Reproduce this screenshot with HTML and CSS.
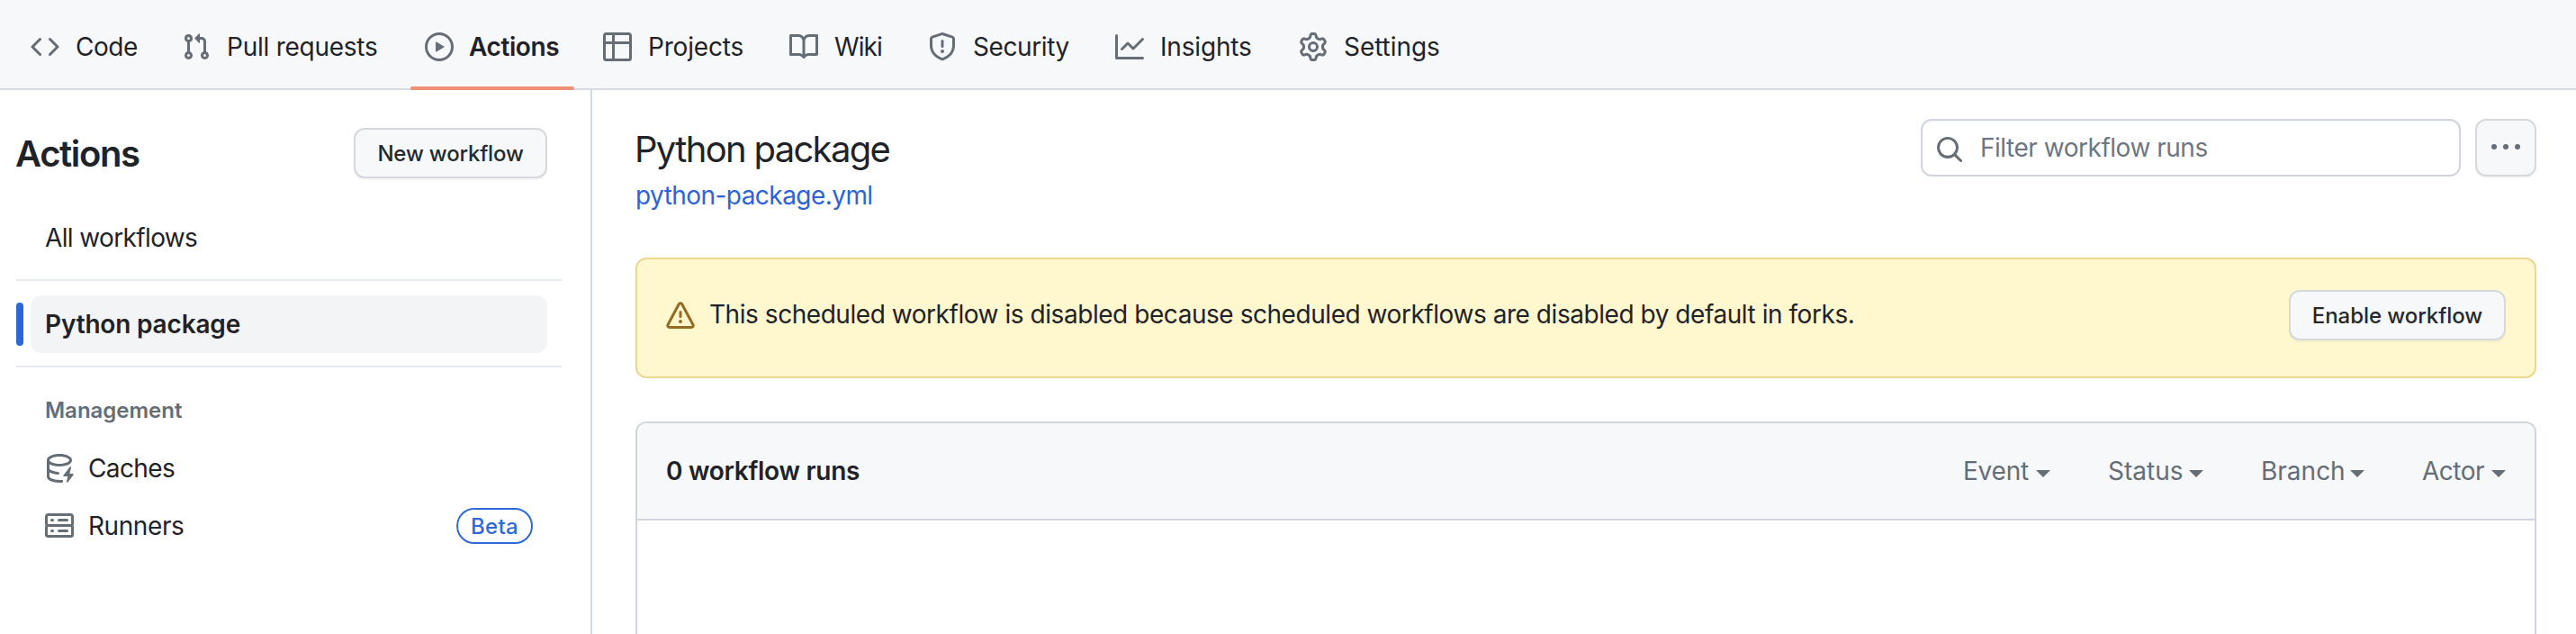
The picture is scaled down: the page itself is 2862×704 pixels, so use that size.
FILE: index.html
```
<!DOCTYPE html>
<html lang="en">
<head>
<meta charset="utf-8">
<title>Actions · Python package</title>
<link rel="stylesheet" href="styles.css">
</head>
<body>
<nav class="repo-nav">
  <a class="tab tab-code"><svg class="icon" viewBox="0 0 16 16"><path d="m11.28 3.22 4.25 4.25a.75.75 0 0 1 0 1.06l-4.25 4.25a.749.749 0 0 1-1.275-.326.749.749 0 0 1 .215-.734L13.94 8l-3.72-3.72a.749.749 0 0 1 .326-1.275.749.749 0 0 1 .734.215Zm-6.56 0a.751.751 0 0 1 1.042.018.751.751 0 0 1 .018 1.042L2.06 8l3.72 3.72a.749.749 0 0 1-.326 1.275.749.749 0 0 1-.734-.215L.47 8.53a.75.75 0 0 1 0-1.06Z"/></svg><span>Code</span></a>
  <a class="tab tab-pulls"><svg class="icon" viewBox="0 0 16 16"><path d="M1.5 3.25a2.25 2.25 0 1 1 3 2.122v5.256a2.251 2.251 0 1 1-1.5 0V5.372A2.25 2.25 0 0 1 1.5 3.25Zm5.677-.177L9.573.677A.25.25 0 0 1 10 .854V2.5h1A2.5 2.5 0 0 1 13.5 5v5.628a2.251 2.251 0 1 1-1.5 0V5a1 1 0 0 0-1-1h-1v1.646a.25.25 0 0 1-.427.177L7.177 3.427a.25.25 0 0 1 0-.354ZM3.75 2.5a.75.75 0 1 0 0 1.5.75.75 0 0 0 0-1.5Zm0 9.5a.75.75 0 1 0 0 1.5.75.75 0 0 0 0-1.5Zm8.25.75a.75.75 0 1 0 1.5 0 .75.75 0 0 0-1.5 0Z"/></svg><span>Pull requests</span></a>
  <a class="tab tab-actions selected"><svg class="icon" viewBox="0 0 16 16"><path d="M8 0a8 8 0 1 1 0 16A8 8 0 0 1 8 0ZM1.5 8a6.5 6.5 0 1 0 13 0 6.5 6.5 0 0 0-13 0Zm4.879-2.773 4.264 2.559a.25.25 0 0 1 0 .428l-4.264 2.559A.25.25 0 0 1 6 10.559V5.442a.25.25 0 0 1 .379-.215Z"/></svg><span>Actions</span></a>
  <a class="tab tab-projects"><svg class="icon" viewBox="0 0 16 16"><path d="M0 1.75C0 .784.784 0 1.75 0h12.5C15.216 0 16 .784 16 1.75v12.5A1.75 1.75 0 0 1 14.25 16H1.75A1.75 1.75 0 0 1 0 14.25ZM6.5 6.5v8h7.75a.25.25 0 0 0 .25-.25V6.5Zm8-1.5V1.75a.25.25 0 0 0-.25-.25H6.5V5Zm-13 1.5v7.75c0 .138.112.25.25.25H5v-8ZM5 5V1.5H1.75a.25.25 0 0 0-.25.25V5Z"/></svg><span>Projects</span></a>
  <a class="tab tab-wiki"><svg class="icon" viewBox="0 0 16 16"><path d="M0 1.75A.75.75 0 0 1 .75 1h4.253c1.227 0 2.317.59 3 1.501A3.743 3.743 0 0 1 11.006 1h4.245a.75.75 0 0 1 .75.75v10.5a.75.75 0 0 1-.75.75h-4.507a2.25 2.25 0 0 0-1.591.659l-.622.621a.75.75 0 0 1-1.06 0l-.622-.621A2.25 2.25 0 0 0 5.258 13H.75a.75.75 0 0 1-.75-.75Zm7.251 10.324.004-5.073-.002-2.253A2.25 2.25 0 0 0 5.003 2.5H1.5v9h3.757a3.75 3.75 0 0 1 1.994.574ZM8.755 4.75l-.004 7.322a3.752 3.752 0 0 1 1.992-.572H14.5v-9h-3.495a2.25 2.25 0 0 0-2.25 2.25Z"/></svg><span>Wiki</span></a>
  <a class="tab tab-security"><svg class="icon" viewBox="0 0 16 16"><path d="M7.467.133a1.748 1.748 0 0 1 1.066 0l5.25 1.68A1.75 1.75 0 0 1 15 3.48V7c0 1.566-.32 3.182-1.303 4.682-.983 1.498-2.585 2.813-5.032 3.855a1.697 1.697 0 0 1-1.33 0c-2.447-1.042-4.049-2.357-5.032-3.855C1.32 10.182 1 8.566 1 7V3.48a1.75 1.75 0 0 1 1.217-1.667Zm.61 1.429a.25.25 0 0 0-.153 0l-5.25 1.68a.25.25 0 0 0-.174.238V7c0 1.358.275 2.666 1.057 3.86.784 1.194 2.121 2.34 4.366 3.297a.196.196 0 0 0 .154 0c2.245-.956 3.582-2.104 4.366-3.298C13.225 9.666 13.5 8.36 13.5 7V3.48a.251.251 0 0 0-.174-.237l-5.25-1.68ZM8.75 4.75v3a.75.75 0 0 1-1.5 0v-3a.75.75 0 0 1 1.5 0ZM9 10.5a1 1 0 1 1-2 0 1 1 0 0 1 2 0Z"/></svg><span>Security</span></a>
  <a class="tab tab-insights"><svg class="icon" viewBox="0 0 16 16"><path d="M1.5 1.75V13.5h13.75a.75.75 0 0 1 0 1.5H.75a.75.75 0 0 1-.75-.75V1.75a.75.75 0 0 1 1.5 0Zm14.28 2.53-5.25 5.25a.75.75 0 0 1-1.06 0L7 7.06 4.28 9.78a.751.751 0 0 1-1.042-.018.751.751 0 0 1-.018-1.042l3.25-3.25a.75.75 0 0 1 1.06 0L10 7.94l4.72-4.72a.751.751 0 0 1 1.042.018.751.751 0 0 1 .018 1.042Z"/></svg><span>Insights</span></a>
  <a class="tab tab-settings"><svg class="icon" viewBox="0 0 16 16"><path d="M8 0a8.2 8.2 0 0 1 .701.031C9.444.095 9.99.645 10.16 1.29l.288 1.107c.018.066.079.158.212.224.231.114.454.243.668.386.123.082.233.09.299.071l1.103-.303c.644-.176 1.392.021 1.82.63.27.385.506.792.704 1.218.315.675.111 1.422-.364 1.891l-.814.806c-.049.048-.098.147-.088.294.016.257.016.515 0 .772-.01.147.038.246.088.294l.814.806c.475.469.679 1.216.364 1.891a7.977 7.977 0 0 1-.704 1.217c-.428.61-1.176.807-1.82.63l-1.102-.302c-.067-.019-.177-.011-.3.071a5.909 5.909 0 0 1-.668.386c-.133.066-.194.158-.211.224l-.29 1.106c-.168.646-.715 1.196-1.458 1.26a8.006 8.006 0 0 1-1.402 0c-.743-.064-1.289-.614-1.458-1.26l-.289-1.106c-.018-.066-.079-.158-.212-.224a5.738 5.738 0 0 1-.668-.386c-.123-.082-.233-.09-.299-.071l-1.103.303c-.644.176-1.392-.021-1.82-.63a8.12 8.12 0 0 1-.704-1.218c-.315-.675-.111-1.422.363-1.891l.815-.806c.05-.048.098-.147.088-.294a6.214 6.214 0 0 1 0-.772c.01-.147-.038-.246-.088-.294l-.815-.806C.635 6.045.431 5.298.746 4.623a7.92 7.92 0 0 1 .704-1.217c.428-.61 1.176-.807 1.82-.63l1.102.302c.067.019.177.011.3-.071.214-.143.437-.272.668-.386.133-.066.194-.158.211-.224l.29-1.106C6.009.645 6.556.095 7.299.03 7.53.01 7.764 0 8 0Zm-.571 1.525c-.036.003-.108.036-.137.146l-.289 1.105c-.147.561-.549.967-.998 1.189-.173.086-.34.183-.5.29-.417.278-.97.423-1.529.27l-1.103-.303c-.109-.03-.175.016-.195.045-.22.312-.412.644-.573.99-.014.031-.021.11.059.19l.815.806c.411.406.562.957.53 1.456a4.709 4.709 0 0 0 0 .582c.032.499-.119 1.05-.53 1.456l-.815.806c-.081.08-.073.159-.059.19.162.346.353.677.573.989.02.03.085.076.195.046l1.102-.303c.56-.153 1.113-.008 1.53.27.161.107.328.204.501.29.447.222.85.629.997 1.189l.289 1.105c.029.109.101.143.137.146a6.6 6.6 0 0 0 1.142 0c.036-.003.108-.036.137-.146l.289-1.105c.147-.561.549-.967.998-1.189.173-.086.34-.183.5-.29.417-.278.97-.423 1.529-.27l1.103.303c.109.029.175-.016.195-.045.22-.313.411-.644.573-.99.014-.031.021-.11-.059-.19l-.815-.806c-.411-.406-.562-.957-.53-1.456a4.709 4.709 0 0 0 0-.582c-.032-.499.119-1.05.53-1.456l.815-.806c.081-.08.073-.159.059-.19a6.464 6.464 0 0 0-.573-.989c-.02-.03-.085-.076-.195-.046l-1.102.303c-.56.153-1.113.008-1.53-.27a4.44 4.44 0 0 0-.501-.29c-.447-.222-.85-.629-.997-1.189l-.289-1.105c-.029-.11-.101-.143-.137-.146a6.6 6.6 0 0 0-1.142 0ZM11 8a3 3 0 1 1-6 0 3 3 0 0 1 6 0ZM9.5 8a1.5 1.5 0 1 0-3.001.001A1.5 1.5 0 0 0 9.5 8Z"/></svg><span>Settings</span></a>
</nav>
<div class="layout">
  <aside class="sidebar">
    <header class="sidebar-head">
      <h2 class="sidebar-title">Actions</h2>
      <button class="btn btn-new">New workflow</button>
    </header>
    <a class="side-item all-workflows"><span>All workflows</span></a>
    <hr class="divider">
    <div class="current-row">
      <span class="marker"></span>
      <a class="side-item current"><span>Python package</span></a>
    </div>
    <hr class="divider divider-last">
    <h3 class="group-title">Management</h3>
    <a class="side-item caches"><svg class="icon" viewBox="0 0 16 16"><path d="M2.5 5.724V8c0 .248.238.7 1.169 1.159.874.43 2.144.745 3.62.822a.75.75 0 1 1-.078 1.498c-1.622-.085-3.102-.432-4.204-.975a5.565 5.565 0 0 1-.507-.28V12.5c0 .133.058.318.282.551.227.237.591.483 1.101.707 1.015.447 2.47.742 4.117.742.406 0 .802-.018 1.183-.052a.751.751 0 1 1 .134 1.494C8.89 15.98 8.45 16 8 16c-1.805 0-3.475-.32-4.721-.869-.623-.274-1.173-.619-1.579-1.041-.408-.425-.7-.964-.7-1.59v-9c0-.626.292-1.165.7-1.591.406-.42.956-.766 1.579-1.04C4.525.32 6.195 0 8 0c1.806 0 3.476.32 4.721.869.623.274 1.173.619 1.579 1.041.408.425.7.964.7 1.59 0 .626-.292 1.165-.7 1.591-.406.42-.956.766-1.578 1.04C11.475 6.68 9.805 7 8 7c-1.805 0-3.475-.32-4.721-.869a6.15 6.15 0 0 1-.779-.407Zm0-2.224c0 .133.058.318.282.551.227.237.591.483 1.101.707C4.898 5.205 6.353 5.5 8 5.5c1.646 0 3.101-.295 4.118-.742.508-.224.873-.471 1.1-.708.224-.232.282-.417.282-.55 0-.133-.058-.318-.282-.551-.227-.237-.591-.483-1.101-.707C11.102 1.795 9.647 1.5 8 1.5c-1.646 0-3.101.295-4.118.742-.508.224-.873.471-1.1.708-.224.232-.282.417-.282.55Z"/><path d="M14.49 7.582a.375.375 0 0 0-.66-.313l-3.625 4.625a.375.375 0 0 0 .295.606h2.127l-.619 2.922a.375.375 0 0 0 .666.304l3.125-4.125A.375.375 0 0 0 15.5 11h-1.778l.769-3.418Z"/></svg><span>Caches</span></a>
    <a class="side-item runners"><svg class="icon" viewBox="0 0 16 16"><path d="M1.75 1h12.5c.966 0 1.75.784 1.75 1.75v4c0 .372-.116.717-.314 1 .198.283.314.628.314 1v4a1.75 1.75 0 0 1-1.75 1.75H1.75A1.75 1.75 0 0 1 0 12.75v-4c0-.358.109-.707.314-1a1.739 1.739 0 0 1-.314-1v-4C0 1.784.784 1 1.75 1ZM1.5 2.75v4c0 .138.112.25.25.25h12.5a.25.25 0 0 0 .25-.25v-4a.25.25 0 0 0-.25-.25H1.75a.25.25 0 0 0-.25.25Zm.25 5.75a.25.25 0 0 0-.25.25v4c0 .138.112.25.25.25h12.5a.25.25 0 0 0 .25-.25v-4a.25.25 0 0 0-.25-.25ZM7 4.75A.75.75 0 0 1 7.75 4h4.5a.75.75 0 0 1 0 1.5h-4.5A.75.75 0 0 1 7 4.75ZM7.75 10h4.5a.75.75 0 0 1 0 1.5h-4.5a.75.75 0 0 1 0-1.5ZM3 4.75A.75.75 0 0 1 3.75 4h.5a.75.75 0 0 1 0 1.5h-.5A.75.75 0 0 1 3 4.75ZM3.75 10h.5a.75.75 0 0 1 0 1.5h-.5a.75.75 0 0 1 0-1.5Z"/></svg><span>Runners</span><span class="badge">Beta</span></a>
  </aside>
  <main class="main">
    <header class="main-head">
      <div class="titles">
        <h1 class="title">Python package</h1>
        <a class="file-link">python-package.yml</a>
      </div>
      <div class="search">
        <svg class="icon search-icon" viewBox="0 0 16 16"><path d="M10.68 11.74a6 6 0 0 1-7.922-8.982 6 6 0 0 1 8.982 7.922l3.04 3.04a.749.749 0 0 1-.326 1.275.749.749 0 0 1-.734-.215ZM11.5 7a4.499 4.499 0 1 0-8.997 0A4.499 4.499 0 0 0 11.5 7Z"/></svg>
        <span>Filter workflow runs</span>
      </div>
      <button class="btn btn-more"><svg class="icon" viewBox="0 0 16 16"><path d="M8 9a1.5 1.5 0 1 0 0-3 1.5 1.5 0 0 0 0 3ZM1.5 9a1.5 1.5 0 1 0 0-3 1.5 1.5 0 0 0 0 3Zm13 0a1.5 1.5 0 1 0 0-3 1.5 1.5 0 0 0 0 3Z"/></svg></button>
    </header>
    <section class="flash">
      <svg class="icon flash-icon" viewBox="0 0 16 16"><path d="M6.457 1.047c.659-1.234 2.427-1.234 3.086 0l6.082 11.378A1.75 1.75 0 0 1 14.082 15H1.918a1.75 1.75 0 0 1-1.543-2.575Zm1.763.707a.25.25 0 0 0-.44 0L1.698 13.132a.25.25 0 0 0 .22.368h12.164a.25.25 0 0 0 .22-.368Zm.53 3.996v2.5a.75.75 0 0 1-1.5 0v-2.5a.75.75 0 0 1 1.5 0ZM9 11a1 1 0 1 1-2 0 1 1 0 0 1 2 0Z"/></svg>
      <p class="flash-text">This scheduled workflow is disabled because scheduled workflows are disabled by default in forks.</p>
      <button class="btn btn-enable">Enable workflow</button>
    </section>
    <section class="runs">
      <header class="runs-head">
        <strong class="runs-count">0 workflow runs</strong>
        <div class="filters">
          <span class="filter event">Event<i class="caret"></i></span>
          <span class="filter status">Status<i class="caret"></i></span>
          <span class="filter branch">Branch<i class="caret"></i></span>
          <span class="filter actor">Actor<i class="caret"></i></span>
        </div>
      </header>
    </section>
  </main>
</div>
</body>
</html>
```
FILE: styles.css
```
* { box-sizing: border-box; }
body {
  margin: 0;
  height: 704px;
  overflow: hidden;
  display: flex;
  flex-direction: column;
  background: #fff;
  color: #1f2328;
  font: 400 28px/42px Inter, "Liberation Sans", sans-serif;
  white-space: nowrap;
}
h1, h2, h3, p { margin: 0; font-weight: 400; }
.icon { display: block; flex: none; width: 32px; height: 32px; fill: #656d76; }

.repo-nav {
  display: flex;
  flex: none;
  gap: 16px;
  height: 100px;
  padding-left: 18px;
  background: #f6f8fa;
  border-bottom: 2px solid #d5dbe1;
}
.tab {
  display: flex;
  align-items: center;
  gap: 18px;
  height: 100px;
  padding: 4px 0 0 16px;
}
.tab-code { width: 152px; letter-spacing: -0.46px; }
.tab-pulls { width: 254px; letter-spacing: -0.25px; }
.tab-actions { width: 182px; gap: 17px; letter-spacing: -0.4px; }
.tab-projects { width: 191px; letter-spacing: -0.18px; }
.tab-wiki { width: 138px; letter-spacing: -0.9px; }
.tab-security { width: 192px; letter-spacing: -0.4px; }
.tab-insights { width: 188px; letter-spacing: -0.18px; }
.tab-settings { width: 189px; letter-spacing: -0.06px; }
.selected { position: relative; font-weight: 600; }
.selected::after {
  content: "";
  position: absolute;
  left: 0;
  right: 0;
  bottom: 0;
  height: 4px;
  border-radius: 3px;
  background: #ee8f78;
}

.layout { display: flex; flex: 1; min-height: 0; }
.sidebar {
  flex: none;
  width: 658px;
  padding: 42px 32px 0 18px;
  border-right: 2px solid #d3d9e0;
}
.sidebar-head {
  display: flex;
  justify-content: space-between;
  align-items: center;
  height: 56px;
  margin: 0 16px 34px 0;
}
.sidebar-title {
  margin-left: -1px;
  padding-top: 2px;
  font-weight: 600;
  font-size: 40px;
  letter-spacing: -1.35px;
}
.btn {
  display: flex;
  align-items: center;
  justify-content: center;
  flex: none;
  height: 56px;
  padding: 1px 0 0;
  border: 2px solid #d5d8dd;
  border-radius: 12px;
  background: #f6f8fa;
  box-shadow: 0 2px 0 rgba(31, 35, 40, 0.04);
  color: #24292f;
  font: 500 24px/40px Inter, "Liberation Sans", sans-serif;
}
.btn-new { width: 215px; letter-spacing: -0.18px; }
.side-item {
  display: flex;
  align-items: center;
  gap: 16px;
  height: 64px;
  margin-right: 16px;
  padding: 0 16px 0 32px;
}
.all-workflows { letter-spacing: -0.63px; }
.divider { height: 2px; margin: 14px 0 16px; border: 0; background: #e6eaee; }
.divider-last { margin-bottom: 0; }
.current-row { display: flex; align-items: center; gap: 10px; margin-right: 16px; }
.marker { width: 8px; height: 48px; border-radius: 4px; background: #2c66d8; }
.current {
  flex: 1;
  margin: 0;
  padding-left: 14px;
  border-radius: 12px;
  background: #f3f4f6;
  font-weight: 600;
  letter-spacing: -0.18px;
}
.current-row { gap: 8px; }
.current { padding-left: 16px; }
.group-title {
  height: 80px;
  padding: 29px 0 0 32px;
  color: #656d76;
  font-weight: 600;
  font-size: 24px;
  line-height: 37px;
  letter-spacing: -0.02px;
}
.caches { letter-spacing: -0.61px; }
.runners { letter-spacing: -0.42px; }
.badge {
  width: 85px;
  height: 40px;
  margin-left: auto;
  border: 2px solid #2f68d8;
  border-radius: 20px;
  color: #2f68d8;
  font-weight: 500;
  font-size: 24px;
  line-height: 37px;
  letter-spacing: 0.35px;
  text-align: center;
}

.main {
  display: flex;
  flex-direction: column;
  flex: 1;
  padding: 32px 44px 0 48px;
}
.main-head { display: flex; align-items: flex-start; height: 154px; }
.titles { flex: 1; padding-top: 8px; }
.title { margin: 0 0 4px -1px; font-size: 40px; line-height: 52px; letter-spacing: -1.68px; }
.file-link { display: block; color: #2a64d6; letter-spacing: -0.55px; }
.search {
  display: flex;
  align-items: center;
  gap: 18px;
  width: 600px;
  height: 64px;
  margin-right: 16px;
  padding-left: 14px;
  border: 2px solid #d0d5dd;
  border-radius: 12px;
  box-shadow: inset 0 2px 0 rgba(208, 215, 222, 0.2);
  color: #6e7781;
  letter-spacing: -0.48px;
}
.search-icon { margin-top: 4px; }
.btn-more { width: 68px; height: 64px; padding: 0; }

.flash {
  display: flex;
  align-items: flex-start;
  flex: none;
  height: 134px;
  margin-bottom: 48px;
  padding: 34px 32px 0;
  border: 2px solid #ead790;
  border-radius: 12px;
  background: #fff7cd;
}
.flash-icon { margin: 13px 16px 0 0; fill: #956a21; }
.flash-text { flex: 1; padding-top: 6px; letter-spacing: -0.45px; }
.btn-enable { width: 241px; letter-spacing: -0.05px; }

.runs {
  flex: 1;
  border: 2px solid #d1d6de;
  border-bottom: 0;
  border-radius: 12px 12px 0 0;
}
.runs-head {
  display: flex;
  align-items: center;
  justify-content: space-between;
  height: 108px;
  padding: 0 32px;
  border-bottom: 2px solid #d1d6de;
  border-radius: 10px 10px 0 0;
  background: #f6f8fa;
}
.runs-count { font-weight: 600; letter-spacing: -0.28px; }
.filters { display: flex; gap: 64px; color: #656d76; }
.filter { display: flex; justify-content: space-between; align-items: center; }
.event { width: 97px; letter-spacing: -0.22px; }
.status { width: 106px; }
.branch { width: 115px; }
.actor { width: 93px; letter-spacing: -0.5px; }
.caret {
  margin-top: 6px;
  border: 8px solid transparent;
  border-top-color: #656d76;
  border-bottom: 0;
}
```
